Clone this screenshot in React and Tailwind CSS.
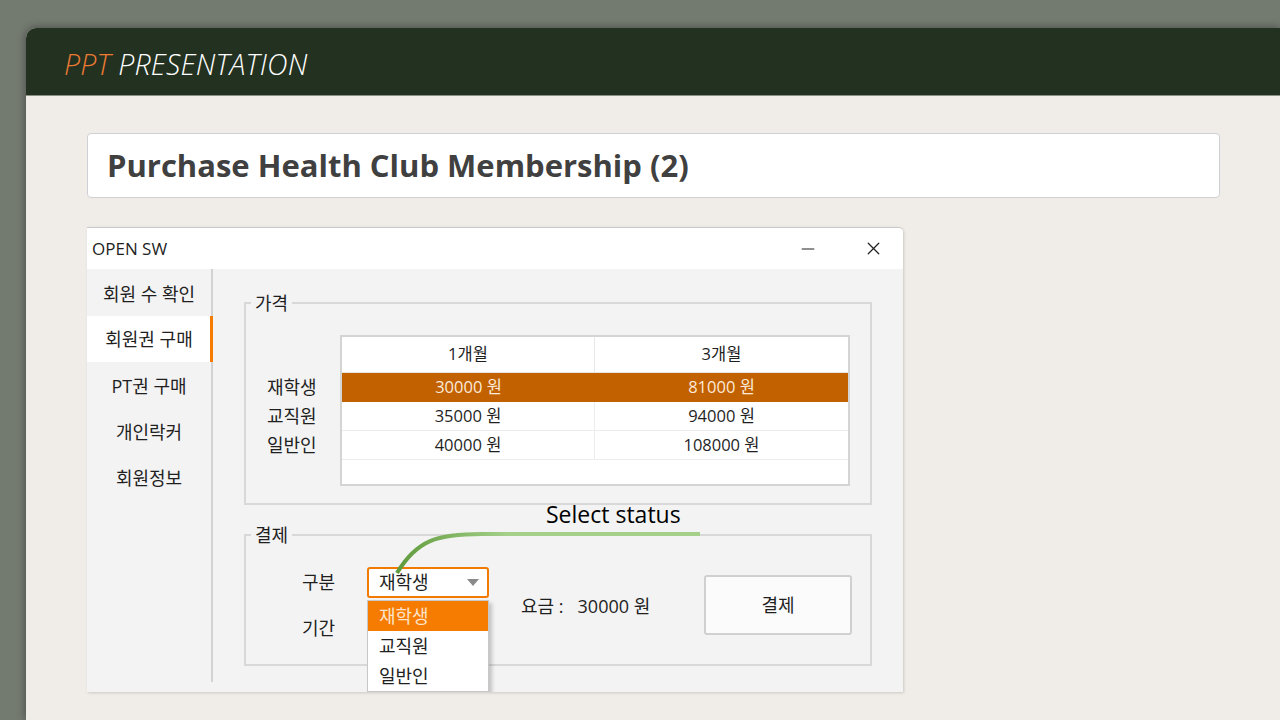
import { X, Minus } from "lucide-react";

const menu = ["회원 수 확인", "회원권 구매", "PT권 구매", "개인락커", "회원정보"];

const prices = [
  { who: "재학생", one: "30000 원", three: "81000 원" },
  { who: "교직원", one: "35000 원", three: "94000 원" },
  { who: "일반인", one: "40000 원", three: "108000 원" },
];

const uiFont = { fontFamily: '"Open Sans", "Noto Sans CJK KR", sans-serif' };

function Sidebar() {
  return (
    <div className="w-[126px] shrink-0 mb-[10px] border-r-2 border-[#d2d2d2] flex flex-col text-[18px] text-[#1f1f1f]">
      {menu.map((item, i) => (
        <div
          key={item}
          className={
            i === 0
              ? "h-[47px] flex items-center justify-center pt-[3px]"
              : i === 1
              ? "h-[46px] flex items-center justify-center bg-white border-r-[3px] border-[#f57c00] -mr-[2px] pl-[1px]"
              : "h-[46px] flex items-center justify-center pt-[3px]"
          }
        >
          {item}
        </div>
      ))}
    </div>
  );
}

function PriceTable() {
  return (
    <div className="flex">
      <div className="w-[94px] shrink-0 pl-[21px] pt-[38px] flex flex-col text-[18px] text-[#1f1f1f]">
        {prices.map((p) => (
          <div key={p.who} className="h-[29px] flex items-center">
            {p.who}
          </div>
        ))}
      </div>
      <div className="w-[510px] h-[151px] bg-white border-2 border-[#d4d4d4] flex flex-col text-[16.5px] text-[#1f1f1f]">
        <div className="h-[36px] flex border-b border-[#e4e4e4]">
          <div className="w-1/2 flex items-center justify-center border-r border-[#e8e8e8]">1개월</div>
          <div className="w-1/2 flex items-center justify-center">3개월</div>
        </div>
        {prices.map((p, i) => (
          <div
            key={p.who}
            className={
              i === 0
                ? "h-[29px] flex bg-[#c26100] text-[#fbe9d9]"
                : "h-[29px] flex border-b border-[#ececec]"
            }
          >
            <div className={i === 0 ? "w-1/2 flex items-center justify-center" : "w-1/2 flex items-center justify-center border-r border-[#ececec]"}>
              {p.one}
            </div>
            <div className="w-1/2 flex items-center justify-center">{p.three}</div>
          </div>
        ))}
      </div>
    </div>
  );
}

function Combo() {
  return (
    <div className="relative w-[122px] h-[31px]">
      <div className="h-full bg-white border-2 border-[#f27a00] rounded-[3px] flex items-center justify-between pl-[10px] pr-[8px] text-[18px] text-[#1f1f1f]">
        <span>재학생</span>
        <span className="w-0 h-0 border-l-[6px] border-r-[6px] border-t-[7px] border-l-transparent border-r-transparent border-t-[#8a8a8a]" />
      </div>
      <div className="absolute left-0 top-[33px] w-[122px] bg-white border border-[#c8c8c8] shadow-[3px_3px_4px_rgba(0,0,0,0.2)] z-10 text-[18px] text-[#1f1f1f]">
        <div className="h-[30px] flex items-center pl-[11px] bg-[#f57c00] text-[#fde3cc]">재학생</div>
        <div className="h-[30px] flex items-center pl-[11px]">교직원</div>
        <div className="h-[30px] flex items-center pl-[11px]">일반인</div>
      </div>
    </div>
  );
}

function Annotation() {
  return (
    <>
      <svg className="absolute left-0 top-0 pointer-events-none z-20" width="816" height="465">
        <defs>
          <linearGradient id="lineGrad" x1="310" y1="0" x2="420" y2="0" gradientUnits="userSpaceOnUse">
            <stop offset="0" stopColor="#5f9a3c" />
            <stop offset="1" stopColor="#a4d08a" />
          </linearGradient>
        </defs>
        <path
          d="M 310 345 C 330 312, 350 306, 395 306 L 613 306"
          fill="none"
          stroke="url(#lineGrad)"
          strokeWidth="4"
        />
      </svg>
      <div className="absolute left-[459px] top-[272px] text-[23px] leading-[28px] text-black z-20" style={uiFont}>
        Select status
      </div>
    </>
  );
}

function AppWindow() {
  return (
    <div
      className="relative w-[816px] h-[465px] mt-[29px] ml-[61px] bg-[#f3f3f3] rounded-tr-[5px] overflow-hidden border-t border-[#c9c9c9] shadow-[1px_1px_3px_rgba(0,0,0,0.15)] flex flex-col"
      style={uiFont}
    >
      <div className="h-[41px] shrink-0 bg-white flex items-center pl-[5px] pr-[19px]">
        <span className="text-[17px] text-[#1f1f1f]">OPEN SW</span>
        <div className="ml-auto flex items-center gap-[45px] text-[#222]">
          <Minus size={20} strokeWidth={1.4} />
          <X size={21} strokeWidth={1.4} />
        </div>
      </div>
      <div className="flex flex-1">
        <Sidebar />
        <div className="flex-1 flex flex-col">
          <fieldset className="mx-[31px] mt-[23px] border-2 border-[#d8d8d8] pb-[17px]">
            <legend className="ml-[5px] px-[4px] text-[18px] leading-[22px] text-[#1f1f1f]">가격</legend>
            <div className="pt-[21px]">
              <PriceTable />
            </div>
          </fieldset>
          <fieldset className="mx-[31px] mt-[19px] border-2 border-[#d8d8d8]">
            <legend className="ml-[5px] px-[4px] text-[18px] leading-[22px] text-[#1f1f1f]">결제</legend>
            <div className="flex items-start pt-[21px] pl-[56px] pr-[18px] pb-[21px] text-[18px] text-[#1f1f1f]">
              <div className="flex flex-col">
                <div className="flex items-center h-[31px]">
                  <span className="w-[65px]">구분</span>
                  <Combo />
                </div>
                <div className="flex items-center h-[30px] mt-[15px]">
                  <span>기간</span>
                </div>
              </div>
              <div className="ml-[32px] mt-[28px] leading-[22px] whitespace-pre">요금 :   30000 원</div>
              <button className="ml-auto mt-[8px] w-[148px] h-[60px] bg-[#fbfbfb] border-2 border-[#d0d0d0] rounded-[3px] text-[18px] text-[#1f1f1f]">
                결제
              </button>
            </div>
          </fieldset>
        </div>
      </div>
      <Annotation />
    </div>
  );
}

export default function App() {
  return (
    <div className="w-[1280px] h-[720px] bg-[#737a70] pt-[28px] pl-[26px] overflow-hidden flex">
      <div className="flex-1 flex flex-col bg-[#f0ede8] rounded-tl-[10px] overflow-hidden shadow-[0_0_8px_rgba(0,0,0,0.4)]">
        <div className="h-[68px] shrink-0 bg-[#233120] flex items-center pl-[38px] pt-[5px] border-b border-[#8a8f86]">
          <span
            className="italic font-light text-[28.5px] tracking-[0.2px]"
            style={{ fontFamily: '"Open Sans", sans-serif' }}
          >
            <span className="text-[#ec7a34]">PPT</span>
            <span className="text-white"> PRESENTATION</span>
          </span>
        </div>
        <div className="flex flex-col">
          <div className="mt-[37px] ml-[61px] w-[1133px] h-[65px] bg-white border border-[#cfd0d6] rounded-[4px] flex items-center pl-[19px]">
            <span
              className="font-bold text-[31px] text-[#404040]"
              style={{ fontFamily: '"Open Sans", sans-serif' }}
            >
              Purchase Health Club Membership (2)
            </span>
          </div>
          <AppWindow />
        </div>
      </div>
    </div>
  );
}
